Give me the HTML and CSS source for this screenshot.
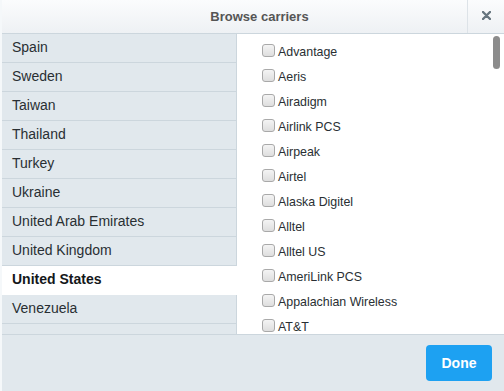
FILE: index.html
```html
<!DOCTYPE html>
<html>
<head>
  <title>Browse carriers</title>
  <link rel="stylesheet" href="styles.css">
</head>
<body>
  <div class="dialog">
    <!-- Header -->
    <div class="dialog-header">
      <div class="dialog-title">Browse carriers</div>
      <button class="close-btn" type="button" aria-label="Close">
        <svg width="9" height="9" viewBox="0 0 9 9">
          <path d="M1 1 L8 8 M8 1 L1 8" stroke="#66757f" stroke-width="2.4" stroke-linecap="round"/>
        </svg>
      </button>
    </div>

    <!-- Body -->
    <div class="dialog-body">
      <ul class="country-list">
        <li>Spain</li>
        <li>Sweden</li>
        <li>Taiwan</li>
        <li>Thailand</li>
        <li>Turkey</li>
        <li>Ukraine</li>
        <li>United Arab Emirates</li>
        <li>United Kingdom</li>
        <li class="active">United States</li>
        <li>Venezuela</li>
        <li class="empty"></li>
      </ul>

      <div class="carrier-pane">
        <ul class="carrier-list">
          <li><label><input type="checkbox"> Advantage</label></li>
          <li><label><input type="checkbox"> Aeris</label></li>
          <li><label><input type="checkbox"> Airadigm</label></li>
          <li><label><input type="checkbox"> Airlink PCS</label></li>
          <li><label><input type="checkbox"> Airpeak</label></li>
          <li><label><input type="checkbox"> Airtel</label></li>
          <li><label><input type="checkbox"> Alaska Digitel</label></li>
          <li><label><input type="checkbox"> Alltel</label></li>
          <li><label><input type="checkbox"> Alltel US</label></li>
          <li><label><input type="checkbox"> AmeriLink PCS</label></li>
          <li><label><input type="checkbox"> Appalachian Wireless</label></li>
          <li><label><input type="checkbox"> AT&amp;T</label></li>
        </ul>
        <div class="scroll-thumb"></div>
      </div>
    </div>

    <!-- Footer -->
    <div class="dialog-footer">
      <button class="done-btn" type="button">Done</button>
    </div>
  </div>
</body>
</html>
```

FILE: styles.css
```css
/* dasar halaman */
html, body {
  margin: 0;
  padding: 0;
  background: #fff;
}

body {
  font-family: "Liberation Sans", Arial, sans-serif;
  color: #292f33;
}

.dialog {
  width: 504px;
  height: 391px;
  display: flex;
  flex-direction: column;
  border-left: 2px solid #f5f8fa;
  box-sizing: border-box;
  overflow: hidden;
}

/* header */
.dialog-header {
  height: 33px;
  display: flex;
  background: linear-gradient(#fbfcfd, #eef1f4);
  border-bottom: 1px solid #ccd6dd;
  flex-shrink: 0;
}

.dialog-title {
  flex: 1;
  text-align: center;
  padding-left: 50px;
  line-height: 33px;
  font-size: 13px;
  font-weight: bold;
  color: #555;
}

.close-btn {
  width: 37px;
  border: none;
  border-left: 1px solid #dde3e8;
  background: transparent;
  padding: 0 0 2px 0;
  display: flex;
  align-items: center;
  justify-content: center;
}

/* body */
.dialog-body {
  flex: 1;
  display: flex;
  min-height: 0;
}

.country-list {
  list-style: none;
  margin: 0;
  padding: 0;
  width: 235px;
  background: #e1e8ed;
  overflow: hidden;
}

.country-list li {
  height: 28px;
  line-height: 27px;
  padding-left: 10px;
  font-size: 14px;
  color: #292f33;
  border-bottom: 1px solid #ccd6dd;
  border-right: 1px solid #ccd6dd;
}

.country-list li.active {
  background: #fff;
  font-weight: bold;
  color: #14171a;
  border-bottom-color: #fff;
  border-right-color: #fff;
}

.carrier-pane {
  flex: 1;
  position: relative;
  background: #fff;
  overflow: hidden;
}

.carrier-list {
  list-style: none;
  margin: 0;
  padding: 6px 0 0 25px;
}

.carrier-list li {
  height: 25px;
  line-height: 25px;
  font-size: 12.4px;
  color: #292f33;
}

.carrier-list label {
  display: flex;
  align-items: center;
}

.carrier-list input {
  appearance: none;
  -webkit-appearance: none;
  width: 13px;
  height: 13px;
  margin: 0 3px 4px 0;
  border: 1px solid #a9a9a9;
  border-radius: 3px;
  background: linear-gradient(#f4f4f4, #dedede);
  box-sizing: border-box;
}

.scroll-thumb {
  position: absolute;
  top: 2px;
  right: 4px;
  width: 7px;
  height: 33px;
  border-radius: 4px;
  background: #8c8c8c;
}

/* footer */
.dialog-footer {
  height: 57px;
  flex-shrink: 0;
  background: #e1e8ed;
  border-top: 1px solid #ccd6dd;
  display: flex;
  justify-content: flex-end;
  align-items: flex-start;
  padding: 10px 12px 0 0;
  box-sizing: border-box;
}

.done-btn {
  width: 66px;
  height: 36px;
  border: none;
  border-radius: 4px;
  background: #1da1f2;
  color: #fff;
  font-family: "Liberation Sans", Arial, sans-serif;
  font-size: 14px;
  font-weight: bold;
}
```
